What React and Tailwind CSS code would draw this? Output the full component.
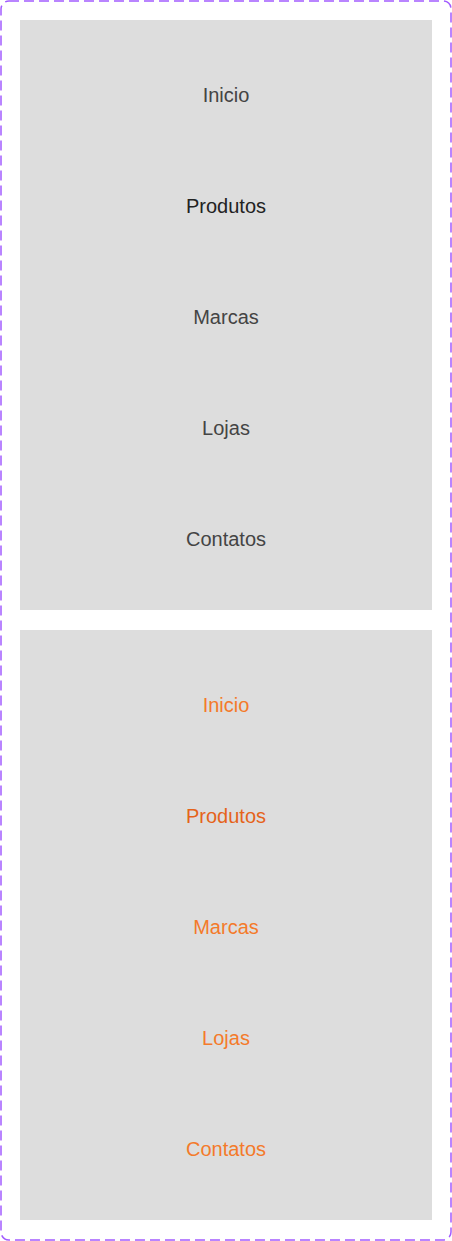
const items = ["Inicio", "Produtos", "Marcas", "Lojas", "Contatos"];

const Menu = ({ tone }) => (
  <ul className="bg-[#dddddd] pt-[19px] pb-[16px]">
    {items.map((label) => {
      const active = label === "Produtos";
      const color =
        tone === "orange"
          ? active ? "text-[#e5631a]" : "text-[#f47a2a]"
          : active ? "text-[#222222]" : "text-[#444444]";
      return (
        <li key={label} className={`h-[111px] flex items-center justify-center text-[20px] ${color}`}>
          {label}
        </li>
      );
    })}
  </ul>
);

export default function App() {
  return (
    <div
      className="relative w-[452px] h-[1241px] p-[20px] flex flex-col gap-[20px]"
      style={{ fontFamily: '"Liberation Sans", Arial, sans-serif' }}
    >
      <Menu tone="gray" />
      <Menu tone="orange" />
      <svg className="absolute inset-0 pointer-events-none" width="452" height="1241">
        <rect
          x="1" y="1" width="450" height="1239" rx="8"
          fill="none" stroke="#a25cff" strokeWidth="1.5" strokeDasharray="10 5"
        />
      </svg>
    </div>
  );
}
